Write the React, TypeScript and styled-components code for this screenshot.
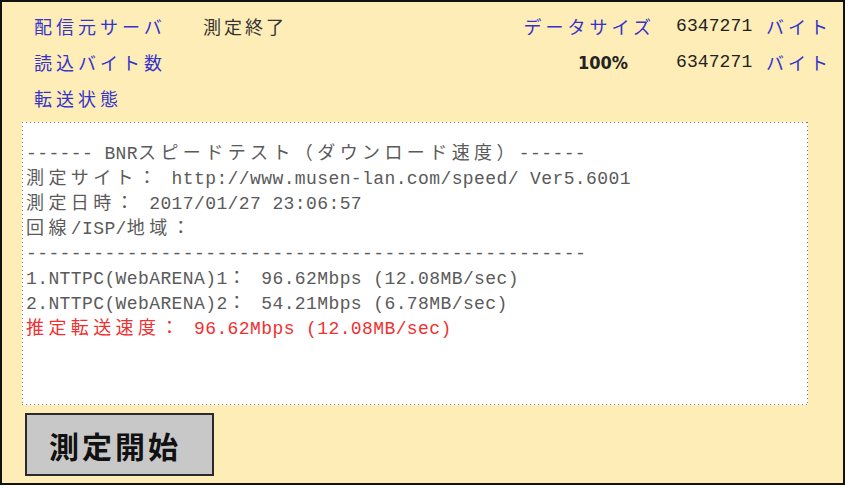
import React from "react";
import styled, { createGlobalStyle } from "styled-components";

const Global = createGlobalStyle`
  html, body { margin: 0; padding: 0; background: #ffffff; }
  body { font-family: "Noto Sans CJK JP", "Liberation Sans", sans-serif; }
`;

const Frame = styled.div`
  box-sizing: border-box;
  width: 845px;
  height: 485px;
  border: 2px solid #111;
  background: #feedb7;
  display: flex;
  flex-direction: column;
`;

const Header = styled.div`
  padding: 6px 11px 0 32px;
  display: flex;
  flex-direction: column;
`;

const Row = styled.div`
  height: 36px;
  display: flex;
  align-items: center;
  justify-content: space-between;
`;

const Left = styled.div`
  display: flex;
  align-items: center;
`;

const Label = styled.span<{ $w?: number }>`
  font-family: "Noto Sans CJK JP", sans-serif;
  font-size: 18px;
  letter-spacing: 4px;
  color: #3434cc;
  width: ${(p) => (p.$w ? `${p.$w}px` : "auto")};
  white-space: nowrap;
`;

const Status = styled.span`
  font-family: "Noto Sans CJK JP", sans-serif;
  font-size: 18px;
  letter-spacing: 3px;
  color: #333;
`;

const Right = styled.div`
  display: grid;
  grid-template-columns: auto 90px 66px;
  align-items: center;
`;

const RightLabel = styled(Label)`
  justify-self: end;
  margin-right: 21px;
`;

const Percent = styled.span`
  justify-self: end;
  margin-right: 48px;
  font-family: "DejaVu Sans", sans-serif;
  font-stretch: condensed;
  font-weight: bold;
  font-size: 18px;
  color: #222;
`;

const Num = styled.span`
  font-family: "Liberation Mono", monospace;
  font-size: 18px;
  color: #222;
  letter-spacing: 0.1px;
`;

const Unit = styled(Label)``;

const LogBox = styled.div`
  margin: 6px 0 0 20px;
  width: 786px;
  height: 283px;
  box-sizing: border-box;
  padding: 20px 4px 0 4px;
  background:
    linear-gradient(to right, #777 1px, transparent 1px) 0 0 / 4px 1px repeat-x,
    linear-gradient(to right, #777 1px, transparent 1px) 0 100% / 4px 1px repeat-x,
    linear-gradient(to bottom, #777 1px, transparent 1px) 0 0 / 1px 4px repeat-y,
    linear-gradient(to bottom, #777 1px, transparent 1px) 100% 0 / 1px 4px repeat-y,
    #ffffff;
  font-family: "Liberation Mono", "Noto Sans CJK JP", monospace;
  font-size: 18px;
  letter-spacing: 0.4px;
  color: #5a5a5a;
  white-space: pre;
  overflow: hidden;
`;

const Line = styled.div<{ $red?: boolean }>`
  height: 25px;
  line-height: 25px;
  color: ${(p) => (p.$red ? "#f03030" : "inherit")};
`;

const Wide = styled.span`
  font-family: "Noto Sans CJK JP", sans-serif;
  letter-spacing: 4.4px;
  line-height: 1;
`;

const StartButton = styled.button`
  margin: 8px 0 0 23px;
  width: 189px;
  height: 63px;
  box-sizing: border-box;
  border: 2px solid #2a2a2a;
  background: #c8c8c8;
  font-family: "Noto Sans CJK JP", sans-serif;
  font-weight: bold;
  font-size: 30px;
  letter-spacing: 3px;
  color: #111;
  text-align: left;
  padding: 0 0 0 22px;
  cursor: pointer;
`;

const lines: { text: string; red?: boolean }[] = [
  { text: "------ BNRスピードテスト（ダウンロード速度）------" },
  { text: "測定サイト： http://www.musen-lan.com/speed/ Ver5.6001" },
  { text: "測定日時： 2017/01/27 23:06:57" },
  { text: "回線/ISP/地域：" },
  { text: "--------------------------------------------------" },
  { text: "1.NTTPC(WebARENA)1： 96.62Mbps (12.08MB/sec)" },
  { text: "2.NTTPC(WebARENA)2： 54.21Mbps (6.78MB/sec)" },
  { text: "推定転送速度： 96.62Mbps (12.08MB/sec)", red: true },
];

function Mixed({ text }: { text: string }) {
  const parts = text.split(/([^\x00-\x7F]+)/);
  return (
    <>
      {parts.map((p, i) =>
        /[^\x00-\x7F]/.test(p) ? <Wide key={i}>{p}</Wide> : <React.Fragment key={i}>{p}</React.Fragment>
      )}
    </>
  );
}

export default function App() {
  return (
    <>
      <Global />
      <Frame>
        <Header>
          <Row>
            <Left>
              <Label $w={169}>配信元サーバ</Label>
              <Status>測定終了</Status>
            </Left>
            <Right>
              <RightLabel>データサイズ</RightLabel>
              <Num>6347271</Num>
              <Unit>バイト</Unit>
            </Right>
          </Row>
          <Row>
            <Left>
              <Label>読込バイト数</Label>
            </Left>
            <Right>
              <Percent>100%</Percent>
              <Num>6347271</Num>
              <Unit>バイト</Unit>
            </Right>
          </Row>
          <Row>
            <Left>
              <Label>転送状態</Label>
            </Left>
          </Row>
        </Header>
        <LogBox>
          {lines.map((l, i) => (
            <Line key={i} $red={l.red}>
              <Mixed text={l.text} />
            </Line>
          ))}
        </LogBox>
        <StartButton type="button">測定開始</StartButton>
      </Frame>
    </>
  );
}
